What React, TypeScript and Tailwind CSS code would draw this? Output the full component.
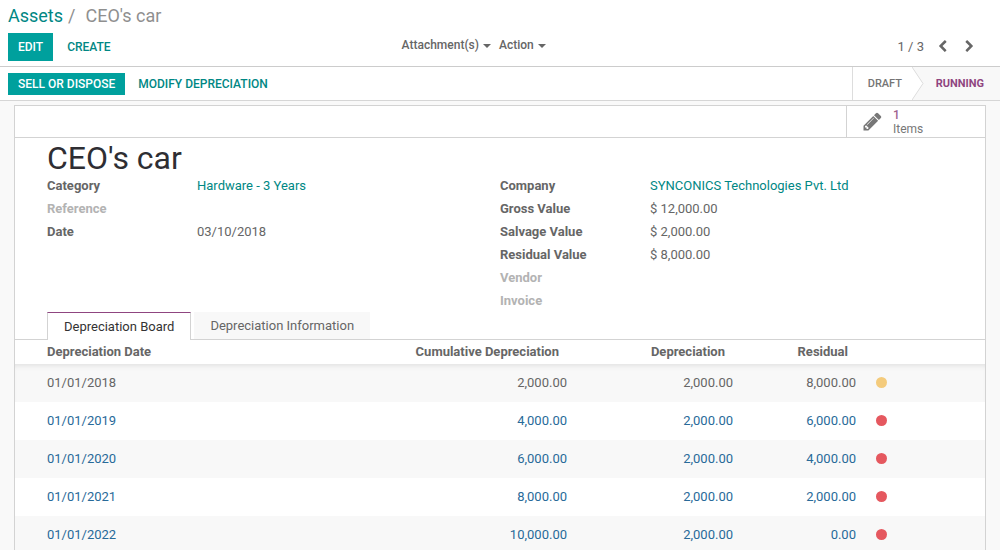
type Line = {
  date: string;
  cumulative: string;
  depreciation: string;
  residual: string;
  posted?: boolean;
};

const lines: Line[] = [
  { date: "01/01/2018", cumulative: "2,000.00", depreciation: "2,000.00", residual: "8,000.00", posted: true },
  { date: "01/01/2019", cumulative: "4,000.00", depreciation: "2,000.00", residual: "6,000.00" },
  { date: "01/01/2020", cumulative: "6,000.00", depreciation: "2,000.00", residual: "4,000.00" },
  { date: "01/01/2021", cumulative: "8,000.00", depreciation: "2,000.00", residual: "2,000.00" },
  { date: "01/01/2022", cumulative: "10,000.00", depreciation: "2,000.00", residual: "0.00" },
];

function Icon({ d, className }: { d: string; className: string }) {
  return (
    <svg viewBox="0 0 1792 1792" fill="currentColor" className={className} aria-hidden="true">
      <path d={d} />
    </svg>
  );
}

const PENCIL =
  "M491 1536l91-91-235-235-91 91v107h128v128h107zM1014 608q0-22-22-22-10 0-17 7l-542 542q-7 7-7 17 0 22 22 22 10 0 17-7l542-542q7-7 7-17zM960 416l416 416-832 832h-416v-416zM1643 512q0 53-37 90l-166 166-416-416 166-165q36-38 90-38 53 0 91 38l235 234q37 39 37 91z";
const CHEVRON_LEFT =
  "M1427 301l-531 531 531 531q19 19 19 45t-19 45l-166 166q-19 19-45 19t-45-19l-742-742q-19-19-19-45t19-45l742-742q19-19 45-19t45 19l166 166q19 19 19 45t-19 45z";
const CHEVRON_RIGHT =
  "M1363 877l-742 742q-19 19-45 19t-45-19l-166-166q-19-19-19-45t19-45l531-531-531-531q-19-19-19-45t19-45l166-166q19-19 45-19t45 19l742 742q19 19 19 45t-19 45z";

function MenuButton({ label }: { label: string }) {
  return (
    <button className="flex items-center gap-1 text-xs font-medium" aria-haspopup="menu">
      {label}
      <svg viewBox="0 0 8 4" className="mt-0.5 h-1 w-2" fill="currentColor" aria-hidden="true">
        <path d="M0 0h8L4 4z" />
      </svg>
    </button>
  );
}

function Field({ label, value, href }: { label: string; value?: string; href?: string }) {
  return (
    <div className="flex h-[23px] items-center">
      <dt className={`w-[150px] shrink-0 font-bold ${value ? "text-[#666666]" : "text-[#b3b3b3]"}`}>{label}</dt>
      <dd>{href ? <a href={href} className="text-[#008784]">{value}</a> : value}</dd>
    </div>
  );
}

function ControlPanel() {
  return (
    <header className="border-b border-[#cccccc] bg-white px-2 pb-[5px]">
      <nav aria-label="Breadcrumb" className="h-[33px] text-lg leading-8">
        <a href="#assets" className="text-[#008784]">Assets</a>
        <span className="px-[5px] text-[#8f8f8f]">/</span>
        <span className="pl-[5px] text-[#8f8f8f]">CEO's car</span>
      </nav>
      <div className="grid grid-cols-[2fr_3fr] items-center">
        <div className="flex items-center gap-1 text-xs">
          <button className="h-7 bg-[#00a09d] px-2.5 font-medium text-white">EDIT</button>
          <button className="h-7 px-2.5 font-medium text-[#008784]">CREATE</button>
        </div>
        <div className="flex items-center justify-between">
          <div className="flex gap-2 pb-1">
            <MenuButton label="Attachment(s)" />
            <MenuButton label="Action" />
          </div>
          <div className="flex items-center pr-4">
            <span className="pr-3">1 / 3</span>
            <button aria-label="Previous" className="pr-3.5 pb-0.5">
              <Icon d={CHEVRON_LEFT} className="size-[13px]" />
            </button>
            <button aria-label="Next" className="pb-0.5">
              <Icon d={CHEVRON_RIGHT} className="size-[13px]" />
            </button>
          </div>
        </div>
      </div>
    </header>
  );
}

function StatusBar() {
  return (
    <div className="flex h-[34px] justify-between border-b border-[#d6d6d6] bg-white pl-2">
      <div className="flex items-center gap-[3px] pt-px text-xs">
        <button className="h-[22px] bg-[#00a09d] px-2.5 font-medium text-white">SELL OR DISPOSE</button>
        <button className="h-[22px] px-2.5 font-medium text-[#008784]">MODIFY DEPRECIATION</button>
      </div>
      <ol className="flex border-l border-[#dddddd] text-[11px]">
        <li className="flex w-[59px] items-center pl-[15px] font-medium text-[#757575]">DRAFT</li>
        <li className="flex items-center bg-[#f8f8f8] pr-4 font-bold text-[#8f4580]" aria-current="step">
          <svg viewBox="0 0 12 33" className="mr-3 h-[33px] w-3" aria-hidden="true">
            <path d="M0 0L11 16.500L0 33z" fill="#fff" />
            <path d="M0 0L11 16.500L0 33" fill="none" stroke="#dddddd" />
          </svg>
          RUNNING
        </li>
      </ol>
    </div>
  );
}

function DepreciationTable() {
  return (
    <table className="w-full table-fixed">
      <colgroup>
        <col />
        <col className="w-[200px]" />
        <col className="w-[166px]" />
        <col className="w-[123px]" />
        <col className="w-[125px]" />
      </colgroup>
      <thead>
        <tr className="h-6 text-right text-[#666666]">
          <th className="pl-8 text-left font-bold">Depreciation Date</th>
          <th className="pr-3 font-bold">Cumulative Depreciation</th>
          <th className="pr-3 font-bold">Depreciation</th>
          <th className="pr-3 font-bold">Residual</th>
          <th aria-label="Status" />
        </tr>
      </thead>
      <tbody>
        {lines.map((line) => (
          <tr
            key={line.date}
            className={`h-[38px] text-right odd:bg-[#f8f8f8] first:shadow-[inset_0_5px_5px_-3px_#e2e2e2] ${line.posted ? "" : "text-[#286a99]"}`}
          >
            <td className="pl-8 text-left">{line.date}</td>
            <td className="pr-1">{line.cumulative}</td>
            <td className="pr-1">{line.depreciation}</td>
            <td className="pr-1">{line.residual}</td>
            <td className="pb-0.5 pl-4">
              <button
                aria-label={line.posted ? "Posted" : "Unposted"}
                className={`block size-[11px] rounded-full ${line.posted ? "bg-[#f4cb7c]" : "bg-[#e5585f]"}`}
              />
            </td>
          </tr>
        ))}
      </tbody>
    </table>
  );
}

export default function App() {
  return (
    <div className="flex h-screen flex-col overflow-hidden bg-[#f9f9f9] font-['Roboto',sans-serif] text-[13px] leading-5 text-[#666666]">
      <ControlPanel />
      <StatusBar />
      <main className="min-h-0 flex-1 overflow-hidden px-3.5 pt-1">
        <section className="border border-[#d3d3d3] bg-white">
          <div className="flex h-8 justify-end border-b border-[#d3d3d3]">
            <button className="flex w-[139px] items-center border-l border-[#d3d3d3] pl-[15px] text-left text-[#777777]">
              <Icon d={PENCIL} className="mr-2.5 size-[21px]" />
              <span className="text-xs leading-[14px]">
                <span className="block font-medium text-[#a0628f]">1</span>
                Items
              </span>
            </button>
          </div>
          <div className="px-8">
            <h1 className="pt-1 text-[32px] leading-8 text-[#2e2e33]">CEO's car</h1>
            <div className="grid grid-cols-2">
              <dl>
                <Field label="Category" value="Hardware - 3 Years" href="#category" />
                <Field label="Reference" />
                <Field label="Date" value="03/10/2018" />
              </dl>
              <dl>
                <Field label="Company" value="SYNCONICS Technologies Pvt. Ltd" href="#company" />
                <Field label="Gross Value" value="$ 12,000.00" />
                <Field label="Salvage Value" value="$ 2,000.00" />
                <Field label="Residual Value" value="$ 8,000.00" />
                <Field label="Vendor" />
                <Field label="Invoice" />
              </dl>
            </div>
          </div>
          <div role="tablist" className="flex h-7 gap-[3px] border-b border-[#d3d3d3] px-8">
            <button
              role="tab"
              aria-selected="true"
              className="-mb-px border-x border-t border-x-[#d3d3d3] border-t-[#8f4580] bg-white px-4 text-[#333333]"
            >
              Depreciation Board
            </button>
            <button role="tab" aria-selected="false" className="bg-[#f8f8f8] px-4">
              Depreciation Information
            </button>
          </div>
          <DepreciationTable />
        </section>
      </main>
    </div>
  );
}
